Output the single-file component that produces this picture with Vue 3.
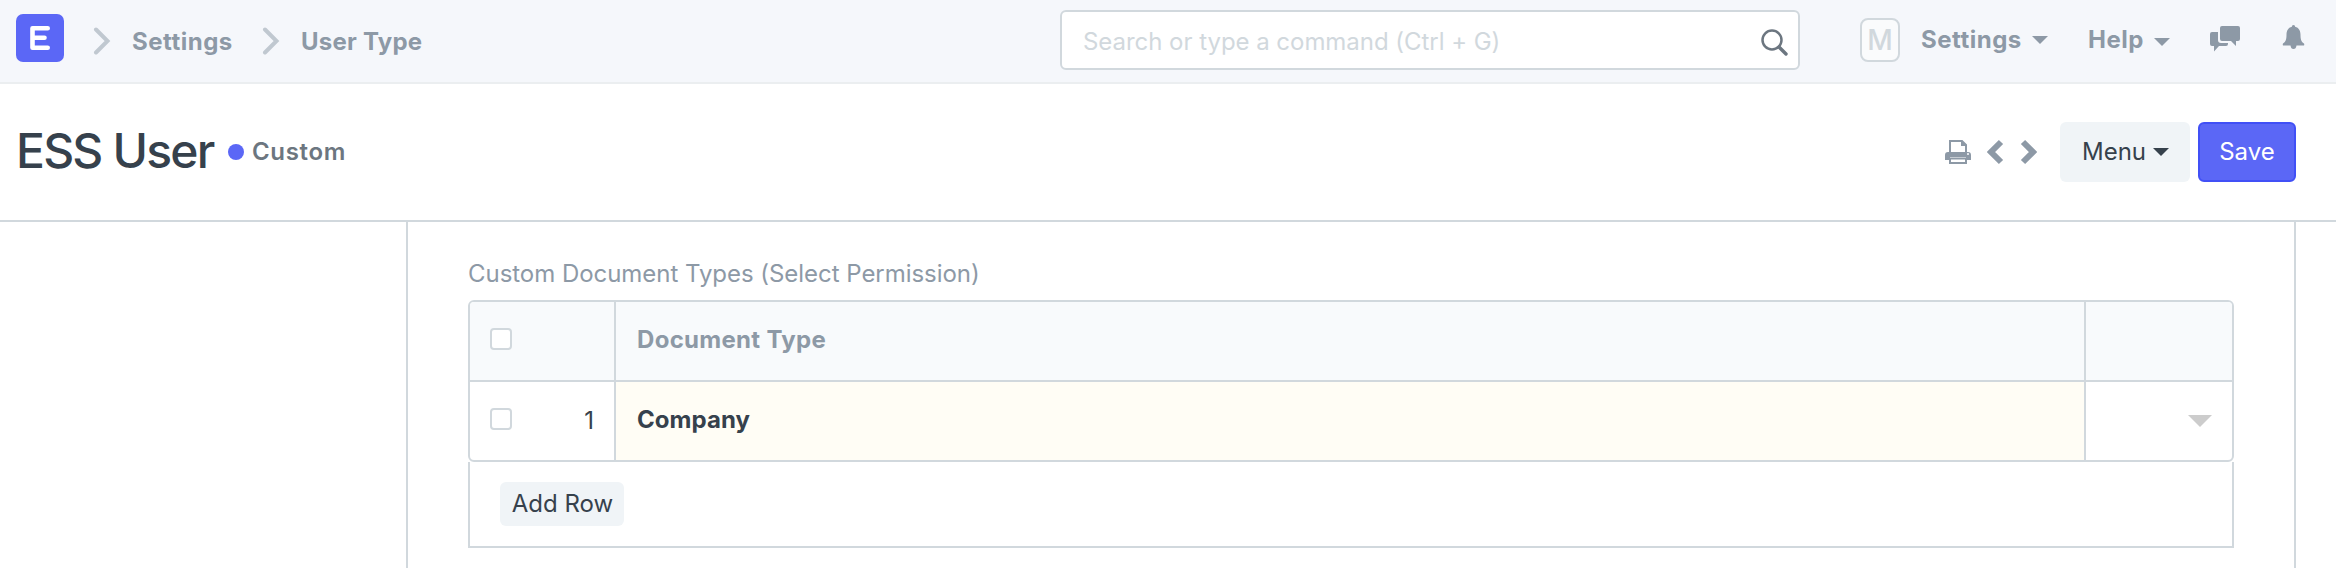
<script setup>
const crumbs = ['Settings', 'User Type']
const rows = [{ idx: 1, name: 'Company' }]
</script>

<template>
  <div class="page">
    <nav class="navbar">
      <svg class="logo" viewBox="0 0 48 48"><rect width="48" height="48" rx="7" fill="#5b67f6" /><path d="M31.700 14.200H16.500V33.800H31.700M17 23.800H28.500" fill="none" stroke="#fff" stroke-width="4.600" stroke-linecap="round" stroke-linejoin="round" /></svg>
      <div v-for="(c, i) in crumbs" :key="c" class="crumb">
        <svg class="sep" viewBox="0 0 18 28"><path d="M3 2.500L14.500 14L3 25.500" fill="none" stroke="#c0c8d0" stroke-width="4" stroke-linecap="round" /></svg>
        <a :class="{ first: i === 0 }">{{ c }}</a>
      </div>
      <div class="search">
        <span>Search or type a command (Ctrl + G)</span>
        <svg viewBox="0 0 28 28"><circle cx="11" cy="11" r="9.500" fill="none" stroke="#6c7680" stroke-width="2.500" /><path d="M18 18L25 25" stroke="#6c7680" stroke-width="3.400" stroke-linecap="round" /></svg>
      </div>
      <div class="avatar">M</div>
      <div class="navitem settings">Settings<i class="caret"></i></div>
      <div class="navitem help">Help<i class="caret"></i></div>
      <svg class="comments" viewBox="0 0 30 26" fill="#8d99a6"><path d="M12 0H28Q30 0 30 2V13Q30 15 28 15H26V20L21 15H12Q10 15 10 13V2Q10 0 12 0Z" /><path d="M2 6H8V14Q8 17 11 17H18V18Q18 20 16 20H9L4 25.500V20H2Q0 20 0 18V8Q0 6 2 6Z" /></svg>
      <svg class="bell" viewBox="0 0 22 25" fill="#8d99a6"><path d="M11 0C12 0 12.600.8 12.600 1.700C16.500 2.600 18 6 18 9.500C18 14 18.500 16.500 21.500 18.500Q22 19.500 21.500 20.500H14Q13.500 24 11 24Q8.500 24 8 20.500H.5Q0 19.500.5 18.500C3.500 16.500 4 14 4 9.500C4 6 5.500 2.600 9.400 1.700C9.400.8 10 0 11 0Z" /></svg>
    </nav>

    <header class="head">
      <h1>ESS User</h1>
      <span class="dot"></span>
      <span class="status">Custom</span>
      <div class="actions">
        <svg class="print" viewBox="0 0 26 24"><path d="M5 13V1H17L21 5V13" fill="none" stroke="#8d99a6" stroke-width="2" /><path d="M16 1V6H21V5L17 1Z" fill="#8d99a6" /><path d="M3 12H23Q26 12 26 15V20H21V17H5V20H0V15Q0 12 3 12Z" fill="#8d99a6" /><path d="M5 18.500H21V23H5Z" fill="#fff" stroke="#8d99a6" stroke-width="2" /><circle cx="23" cy="14" r="1" fill="#fff" /></svg>
        <svg class="prev" viewBox="0 0 17 26"><path d="M14 3L4 13L14 23" fill="none" stroke="#8d99a6" stroke-width="6" /></svg>
        <svg class="next" viewBox="0 0 17 26"><path d="M3 3L13 13L3 23" fill="none" stroke="#8d99a6" stroke-width="6" /></svg>
        <button class="menu">Menu<i class="caret"></i></button>
        <button class="save">Save</button>
      </div>
    </header>

    <main class="body">
      <section class="form">
        <label>Custom Document Types (Select Permission)</label>
        <div class="grid">
          <div class="row heading">
            <div class="idx"><span class="check"></span></div>
            <div class="cell">Document Type</div>
            <div class="end"></div>
          </div>
          <div v-for="r in rows" :key="r.idx" class="row">
            <div class="idx"><span class="check"></span><span class="num">{{ r.idx }}</span></div>
            <div class="cell value">{{ r.name }}</div>
            <div class="end"><i class="open"></i></div>
          </div>
        </div>
        <div class="footer"><button class="add">Add Row</button></div>
      </section>
    </main>
  </div>
</template>

<style scoped>
* { box-sizing: border-box; }
.page { width: 2336px; height: 568px; overflow: hidden; background: #fff; font: 400 24px/34px Inter, sans-serif; color: #36414c; display: flex; flex-direction: column; }
svg { display: block; flex: none; }
button { font: inherit; color: inherit; border: 0; padding: 0; display: flex; align-items: center; justify-content: center; }
.navbar { height: 84px; flex: none; background: #f5f7fb; border-bottom: 2px solid #ebeef0; display: flex; align-items: flex-start; padding-left: 16px; color: #8d99a6; font-weight: 700; }
.logo { width: 48px; height: 48px; margin-top: 14px; }
.crumb { display: flex; margin-top: 25px; }
.crumb a { width: 120px; white-space: nowrap; letter-spacing: 0.25px; }
.crumb a.first { width: 119px; letter-spacing: 0.5px; }
.crumb + .crumb { margin-left: 10px; }
.sep { width: 18px; height: 28px; margin: 2px 21px 0 29px; }
.crumb + .crumb .sep { margin-left: 1px; }
.search { margin: 10px 0 0 auto; width: 740px; height: 60px; border: 2px solid #d1d8dd; border-radius: 6px; background: #fff; color: #d1d8dd; font-weight: 400; letter-spacing: -0.04px; display: flex; justify-content: space-between; padding: 13px 9px 0 21px; }
.search svg { width: 28px; height: 28px; margin-top: 4px; }
.avatar { margin: 18px 0 0 60px; width: 40px; height: 44px; border: 2px solid #d1d8dd; border-radius: 8px; background: #fafbfc; color: #d1d8dd; font-weight: 500; font-size: 28px; line-height: 41px; text-align: center; }
.navitem { margin-top: 23px; display: flex; white-space: nowrap; letter-spacing: 0.5px; }
.settings { margin-left: 21px; width: 167px; }
.help { width: 122px; }
.caret { width: 0; height: 0; border: 8px solid transparent; border-top-color: currentColor; border-bottom: 0; margin: 13px 0 0 10px; }
.help .caret { margin-top: 15px; }
.comments { width: 30px; height: 26px; margin-top: 26px; }
.bell { width: 23px; height: 25px; margin: 25px 31px 0 42px; }
.head { height: 138px; flex: none; border-bottom: 2px solid #d1d8dd; display: flex; align-items: center; padding: 0 40px 0 16px; }
h1 { margin: 0 0 2px; font-size: 48px; line-height: 60px; font-weight: 500; letter-spacing: -1.8px; width: 212px; white-space: nowrap; }
.dot { width: 16px; height: 16px; border-radius: 50%; background: #5b67f6; }
.status { margin-left: 8px; font-weight: 600; letter-spacing: 0.65px; color: #6c7680; }
.actions { margin-left: auto; display: flex; align-items: center; }
.print { width: 26px; height: 24px; }
.prev { width: 17px; height: 26px; margin-left: 16px; }
.next { width: 17px; height: 26px; margin: 0 23px 0 16px; }
.menu { width: 130px; height: 60px; border-radius: 6px; background: #f0f4f7; margin-right: 8px; }
.menu .caret { margin: 0 0 0 7px; }
.menu { padding-left: 1px; }
.save { width: 98px; height: 60px; border-radius: 6px; background: #5b67f6; border: 2px solid #4150f6; color: #fff; }
.body { flex: 1; padding: 0 40px 0 406px; display: flex; }
.form { flex: 1; border: solid #d1d8dd; border-width: 0 2px; padding: 35px 60px 0; }
label { display: block; height: 43px; line-height: 34px; color: #8d99a6; letter-spacing: -0.04px; }
.grid { border: 2px solid #d1d8dd; border-radius: 6px; overflow: hidden; }
.row { height: 78px; display: grid; grid-template-columns: 146px 1fr 146px; }
.row + .row { height: 80px; border-top: 2px solid #d1d8dd; }
.heading { background: #f8fafc; color: #8d99a6; font-weight: 700; letter-spacing: 0.3px; }
.idx { display: flex; align-items: center; justify-content: space-between; border-right: 2px solid #d1d8dd; padding: 0 20px 0 20px; }
.check { width: 22px; height: 22px; border: 2px solid #d1d8dd; border-radius: 4px; margin-bottom: 4px; background: #fff; }
.num { margin-bottom: 1px; }
.cell { padding: 21px; border-right: 2px solid #d1d8dd; }
.value { background: #fffdf5; font-weight: 700; letter-spacing: 0.05px; }
.end { display: flex; align-items: center; justify-content: flex-end; padding-right: 20px; }
.open { border: 12px solid transparent; border-top-color: #ccc; border-bottom: 0; }
.footer { height: 86px; border: 2px solid #d1d8dd; border-top: 0; padding: 20px 30px; }
.add { width: 124px; height: 44px; border-radius: 6px; background: #f0f4f7; padding-left: 1px; }
</style>
